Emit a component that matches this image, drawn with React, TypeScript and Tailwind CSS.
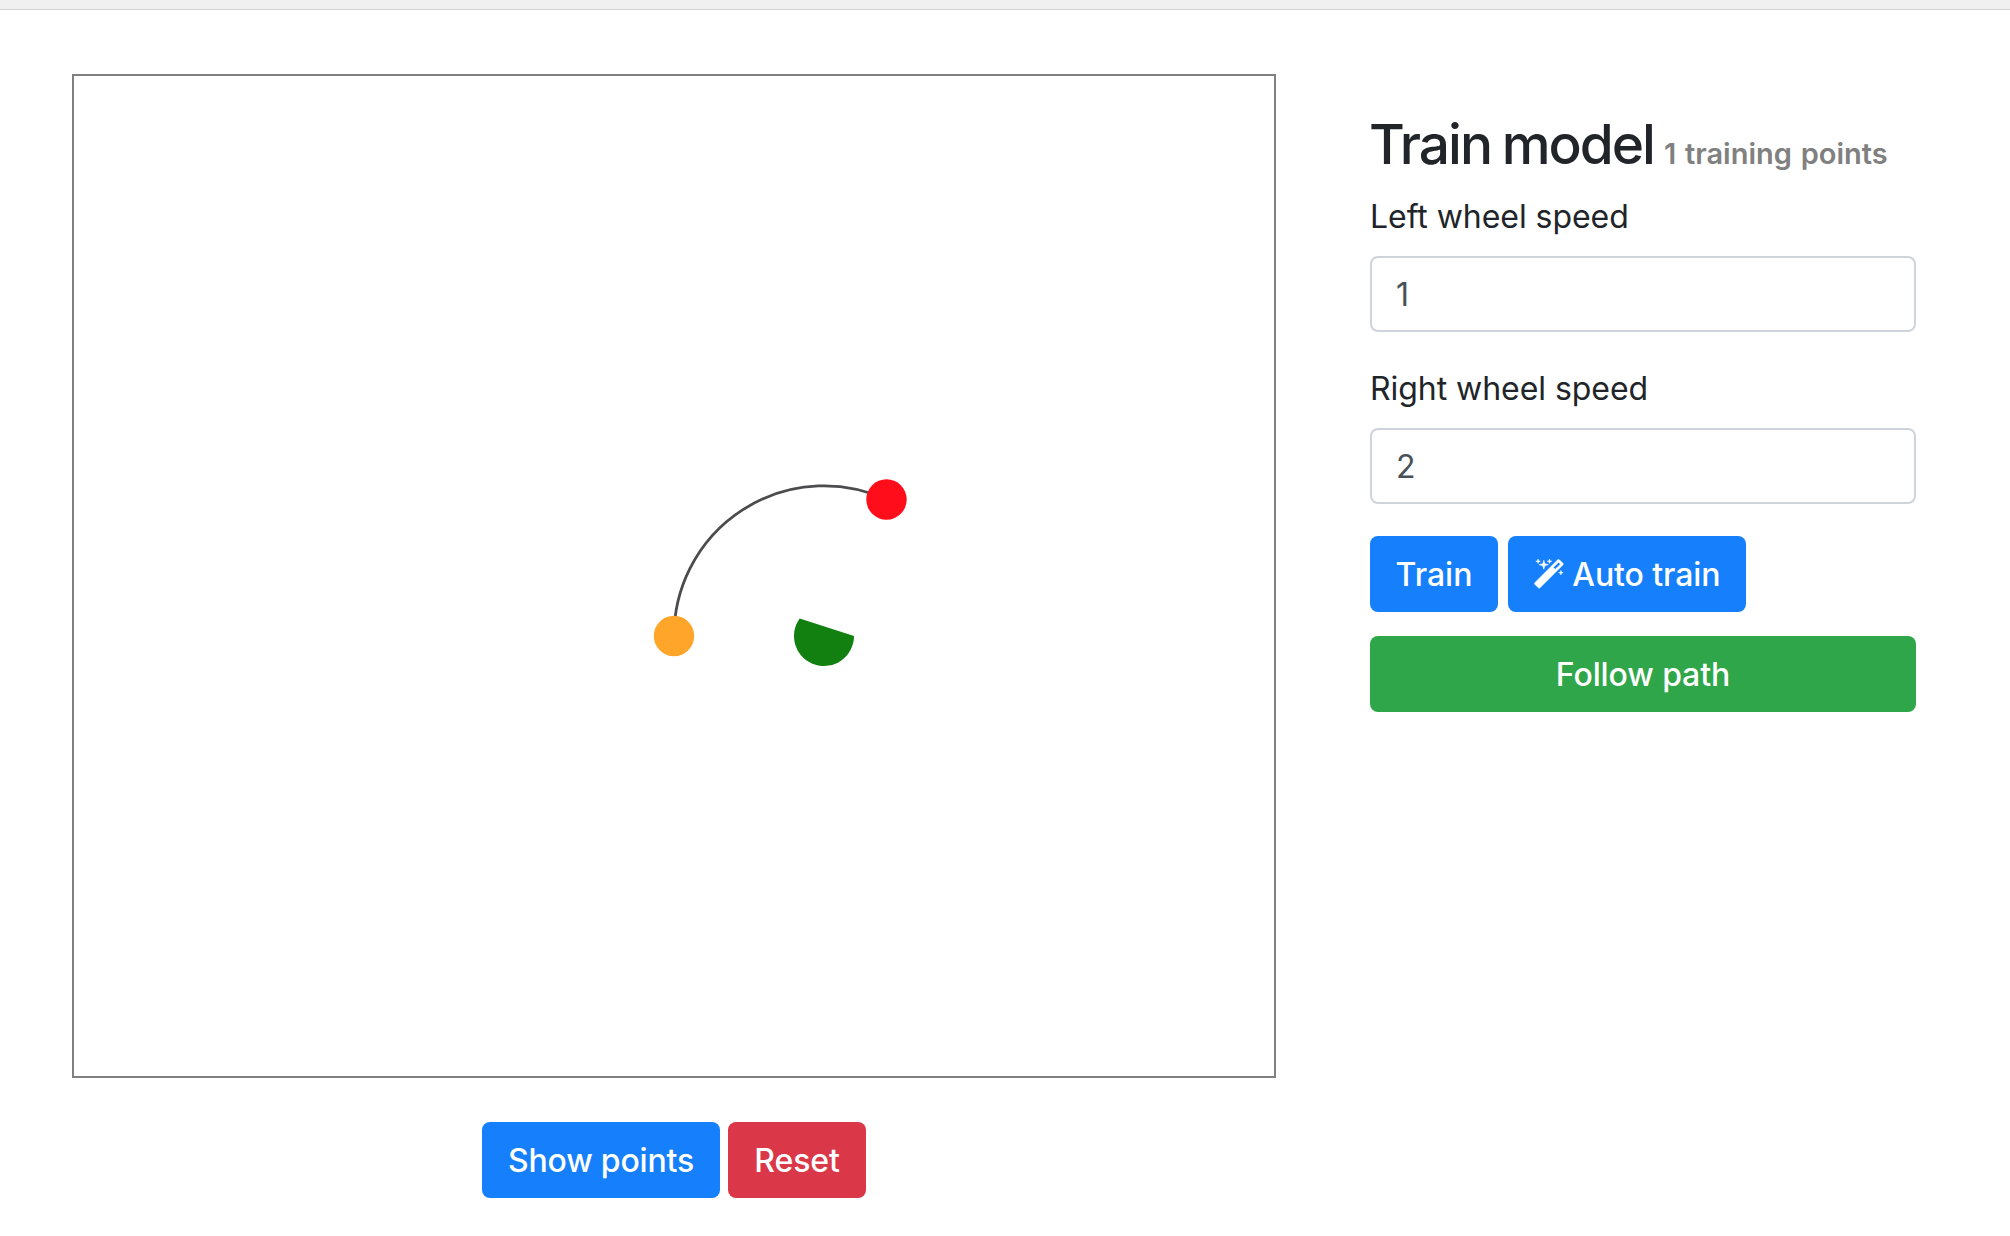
import type { ReactNode } from "react";

function MagicIcon() {
  return (
    <svg
      viewBox="0 0 1664 1637"
      stroke="currentColor"
      strokeWidth="30"
      className="mb-[3px] h-[29.2px] w-[29.7px] shrink-0 overflow-visible fill-current"
      aria-hidden="true"
    >
      <path d="M1190 581l293-293-107-107-293 293zm447-293q0 27-18 45l-1286 1286q-18 18-45 18t-45-18l-198-198q-18-18-18-45t18-45l1286-1286q18-18 45-18t45 18l198 198q18 18 18 45zM259 98l98 30-98 30-30 98-30-98-98-30 98-30 30-98zM609 260l196 60-196 60-60 196-60-196-196-60 196-60 60-196zM1539 738l98 30-98 30-30 98-30-98-98-30 98-30 30-98zM899 98l98 30-98 30-30 98-30-98-98-30 98-30 30-98z" />
    </svg>
  );
}

function Button({ className, children }: { className: string; children: ReactNode }) {
  return (
    <button
      type="button"
      className={`flex h-[76px] items-center justify-center rounded-lg pt-0.5 text-[32px] leading-[48px] font-medium whitespace-nowrap text-white ${className}`}
    >
      {children}
    </button>
  );
}

function SpeedField({ id, label, value }: { id: string; label: string; value: string }) {
  return (
    <div className="mb-8 flex flex-col">
      <label htmlFor={id} className="mb-[15px] pt-px text-[32px] leading-[48px] tracking-[-0.05px]">
        {label}
      </label>
      <input
        id={id}
        type="text"
        defaultValue={value}
        className="h-[76px] w-full rounded-lg border-2 border-[#ced4da] bg-white px-6 text-[32px] leading-[48px] text-[#495057] outline-none"
      />
    </div>
  );
}

function RobotCanvas() {
  return (
    <svg viewBox="0 0 1200 1000" className="block h-[1000px] w-[1200px]">
      <path d="M600 560A150 150 0 0 1 812.5 423.5" fill="none" stroke="#4c4c4e" strokeWidth="2.8" />
      <circle cx="600" cy="560" r="20.2" fill="#ffa52a" />
      <circle cx="812.5" cy="423.5" r="20.2" fill="#ff0d1b" />
      <path d="M780 560A30 30 0 1 1 725.7 542.4Z" fill="#118011" />
    </svg>
  );
}

export default function App() {
  return (
    <div className="h-[1236px] w-[2010px] overflow-hidden bg-white font-['Inter',sans-serif] text-[#212529]">
      <div className="h-[10px] border-b border-[#d2d2d2] bg-[#f0f0f0]" />
      <main className="flex items-start pt-16 pl-[72px]">
        <section className="flex w-[1204px] flex-col items-center">
          <div className="border-2 border-[#808080]">
            <RobotCanvas />
          </div>
          <div className="mt-11 flex gap-2">
            <Button className="w-[238px] bg-[#167ffc] tracking-[-0.2px]">Show points</Button>
            <Button className="w-[138px] bg-[#da3849] tracking-[-0.1px]">Reset</Button>
          </div>
        </section>
        <section className="mt-[34px] ml-[94px] w-[546px]">
          <h1 className="-ml-px flex h-[84px] items-baseline text-[55px] leading-[72px] font-medium whitespace-nowrap">
            <span className="tracking-[-2px] [word-spacing:-2px]">Train model</span>
            <small className="ml-[10px] text-[29px] font-semibold text-[#808080] [word-spacing:1.5px]">
              1 training points
            </small>
          </h1>
          <SpeedField id="left-wheel" label="Left wheel speed" value="1" />
          <SpeedField id="right-wheel" label="Right wheel speed" value="2" />
          <div className="mb-6 flex gap-[10px]">
            <Button className="w-[128px] bg-[#167ffc]">Train</Button>
            <Button className="w-[238px] gap-[9px] bg-[#167ffc] tracking-[-0.1px]">
              <MagicIcon />
              <span>Auto train</span>
            </Button>
          </div>
          <Button className="w-full bg-[#30a64a] tracking-[-0.1px]">Follow path</Button>
        </section>
      </main>
    </div>
  );
}
